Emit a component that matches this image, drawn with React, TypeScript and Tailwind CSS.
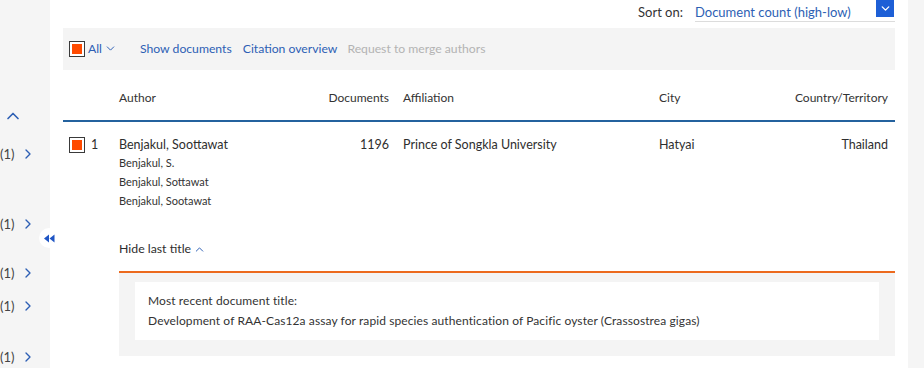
import { ChevronDown, ChevronUp, ChevronRight } from 'lucide-react';

const font = { fontFamily: 'Lato, "Open Sans", sans-serif' };

function Check() {
  return (
    <span className="inline-flex h-4 w-4 items-center justify-center border border-[#3a3a3a] bg-white p-[2px]">
      <span className="h-full w-full bg-[#ff4a00]" />
    </span>
  );
}

function FacetCount({ className = '' }: { className?: string }) {
  return (
    <div className={`flex h-4 items-center gap-[6px] text-[13px] leading-4 text-[#444] ${className}`}>
      <span>(1)</span>
      <ChevronRight className="h-4 w-4 text-[#2d5fb4]" strokeWidth={2} />
    </div>
  );
}

export default function App() {
  return (
    <div className="relative flex h-[368px] w-[924px] overflow-hidden bg-white text-[#2e2e2e]" style={font}>
      {/* left facet strip */}
      <aside className="w-[50px] shrink-0 bg-[#f5f5f5] pt-[106px]">
        <ChevronUp className="ml-[3px] h-[20px] w-[20px] text-[#2d5fb4]" strokeWidth={2} />
        <FacetCount className="mt-[20px]" />
        <FacetCount className="mt-[54px]" />
        <FacetCount className="mt-[33px]" />
        <FacetCount className="mt-[17px]" />
        <FacetCount className="mt-[35px]" />
      </aside>

      {/* collapse tab */}
      <div className="absolute left-[39px] top-[228px] flex h-[20px] w-[20px] items-center justify-center rounded-full bg-white">
        <svg width="11" height="9" viewBox="0 0 11 9" className="text-[#1f55c4]">
          <path d="M0 4.5 L5 0.5 L5 8.5 Z M5.5 4.5 L10.5 0.5 L10.5 8.5 Z" fill="currentColor" />
        </svg>
      </div>

      <main className="flex-1 px-[13px]">
        {/* sort */}
        <div className="flex h-[28px] items-start justify-end">
          <span className="mr-[12px] mt-[3px] text-[13px] text-[#333]">Sort on:</span>
          <div className="relative h-[22px] w-[200px] border-b border-[#dcdcdc]">
            <span className="mt-[3px] block text-[13px] text-[#2d5fb4]">Document count (high-low)</span>
            <span className="absolute right-[1px] top-0 flex h-[17px] w-[18px] items-center justify-center bg-[#1d5fd6]">
              <ChevronDown className="h-[13px] w-[13px] text-white" strokeWidth={2.5} />
            </span>
          </div>
        </div>

        {/* toolbar */}
        <div className="flex h-[42px] items-center bg-[#f4f4f4] pl-[6px] text-[12.2px]">
          <Check />
          <span className="ml-[3px] flex items-center text-[#2d5fb4]">
            All
            <ChevronDown className="ml-[2px] h-[13px] w-[13px]" strokeWidth={1.8} />
          </span>
          <span className="ml-[23px] text-[#2d5fb4]">Show documents</span>
          <span className="ml-[11px] text-[#2d5fb4]">Citation overview</span>
          <span className="ml-[10px] text-[#b3b3b3]">Request to merge authors</span>
        </div>

        {/* table header */}
        <div className="grid grid-cols-[56px_201px_69px_270px_101px_128px] border-b-2 border-[#24629e] pb-[14px] pt-[20px] text-[12px] leading-4 text-[#333]">
          <span />
          <span>Author</span>
          <span className="text-right">Documents</span>
          <span className="pl-[14px]">Affiliation</span>
          <span>City</span>
          <span className="text-right">Country/Territory</span>
        </div>

        {/* row */}
        <div className="grid grid-cols-[56px_201px_69px_270px_101px_128px] pt-[15px] text-[12.5px] leading-4">
          <div className="-mt-[1px] flex items-start pl-[6px] pt-[1px]">
            <Check />
            <span className="ml-[6px] leading-4">1</span>
          </div>
          <div>
            <div>Benjakul, Soottawat</div>
            <div className="text-[11px] leading-[19px] text-[#333]">
              <div>Benjakul, S.</div>
              <div>Benjakul, Sottawat</div>
              <div>Benjakul, Sootawat</div>
            </div>
          </div>
          <span className="text-right">1196</span>
          <span className="pl-[14px]">Prince of Songkla University</span>
          <span>Hatyai</span>
          <span className="text-right">Thailand</span>
        </div>

        <div className="ml-[56px] mt-[31px] flex items-center text-[12.3px] leading-4">
          Hide last title
          <ChevronUp className="ml-[2px] h-[13px] w-[13px] text-[#2d5fb4]" strokeWidth={1.8} />
        </div>

        <div className="ml-[56px] mt-[14px] h-[2px] bg-[#ec6a1e]" />
        <div className="ml-[56px] bg-[#f4f4f4] px-[16px] pb-[16px] pt-[9px]">
          <div className="bg-white px-[13px] py-[9px] text-[12px] leading-5 tracking-[0.1px] text-[#333]">
            <div>Most recent document title:</div>
            <div>Development of RAA-Cas12a assay for rapid species authentication of Pacific oyster (Crassostrea gigas)</div>
          </div>
        </div>
      </main>

      {/* right strip */}
      <aside className="w-[16px] shrink-0 bg-[#f5f5f5]" />
    </div>
  );
}
